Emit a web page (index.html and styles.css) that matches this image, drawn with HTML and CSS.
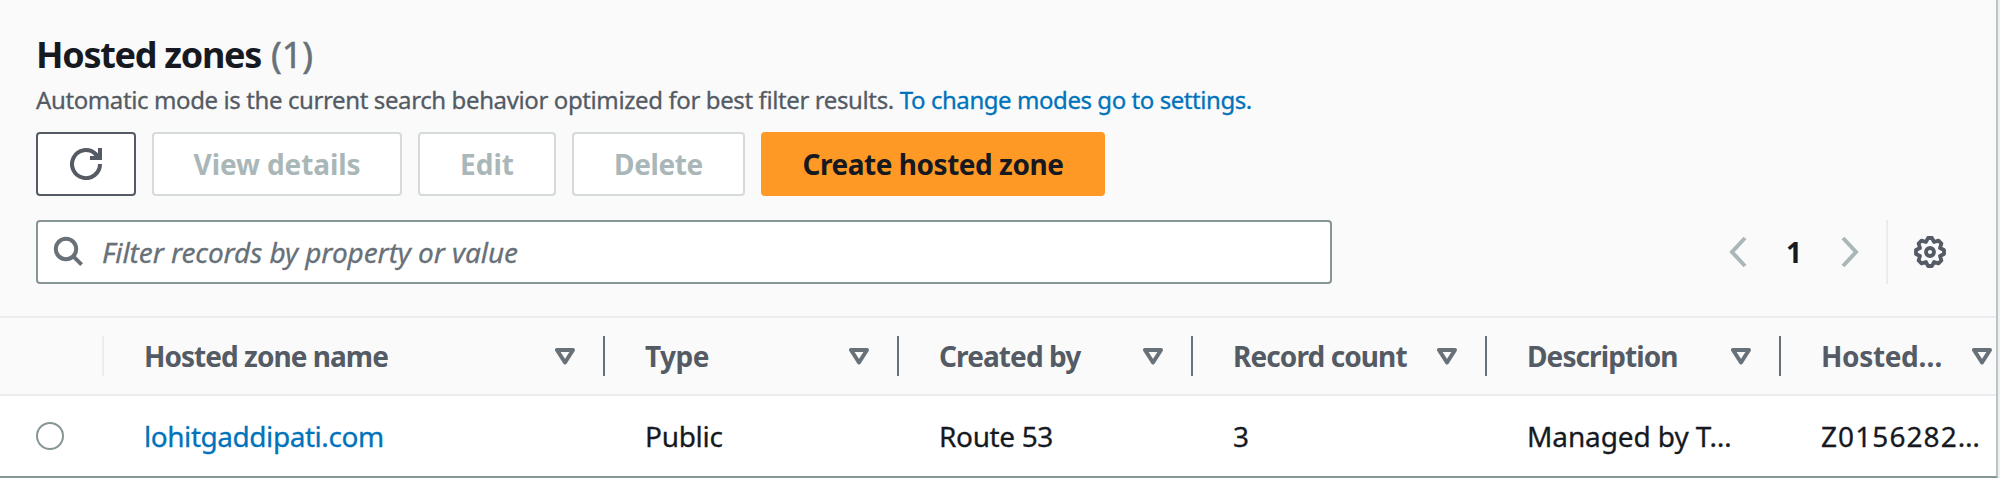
FILE: index.html
```
<!DOCTYPE html>
<html lang="en">
<head>
<meta charset="utf-8">
<title>Hosted zones</title>
<link rel="stylesheet" href="styles.css">
</head>
<body>
<main class="panel">
  <header class="header">
    <h2 class="title"><span class="title-text">Hosted zones</span> <span class="count">(1)</span></h2>
    <p class="desc"><span class="desc-text">Automatic mode is the current search behavior optimized for best filter results.</span><a class="link settings-link">To change modes go to settings.</a></p>
    <div class="actions">
      <button class="btn btn-refresh" aria-label="Refresh"><svg class="icon" viewBox="0 0 32 32"><path d="M30 16a14 14 0 1 1-4.500-10.200L28 8.500"/><path class="solid" d="M28 0h4v12H20V8h4.500l-1.500-2 3-2 2 2z"/></svg></button>
      <button class="btn btn-view" disabled>View details</button>
      <button class="btn btn-edit" disabled>Edit</button>
      <button class="btn btn-delete" disabled>Delete</button>
      <button class="btn btn-primary">Create hosted zone</button>
    </div>
    <div class="tools">
      <div class="search">
        <svg class="icon search-icon" viewBox="0 0 32 32"><circle cx="13" cy="13" r="10.200"/><path d="M20.300 20.300l8.300 8.300"/></svg>
        <span class="placeholder">Filter records by property or value</span>
      </div>
      <nav class="pager">
        <svg class="chevron" viewBox="0 0 18 32"><path d="M16 2L3 16l13 14"/></svg>
        <span class="page">1</span>
        <svg class="chevron" viewBox="0 0 18 32"><path d="M2 2l13 14L2 30"/></svg>
        <span class="rule"></span>
        <svg class="gear" viewBox="0 0 32 32"><path d="M30 14v4L26 20L27.400 24.500L24.500 27.400L20 26L18 30H14L12 26L7.500 27.400L4.600 24.500L6 20L2 18V14L6 12L4.600 7.500L7.500 4.600L12 6L14 2H18L20 6L24.500 4.600L27.400 7.500L26 12z"/><circle cx="16" cy="16" r="4"/></svg>
      </nav>
    </div>
  </header>
  <section class="table">
    <div class="row head">
      <div class="cell select"></div>
      <div class="cell"><span class="h-name">Hosted zone name</span><svg class="caret" viewBox="0 0 20 17"><path d="M2 2h16l-8 12.500z"/></svg></div>
      <div class="cell"><span class="h-type">Type</span><svg class="caret" viewBox="0 0 20 17"><path d="M2 2h16l-8 12.500z"/></svg></div>
      <div class="cell"><span class="h-by">Created by</span><svg class="caret" viewBox="0 0 20 17"><path d="M2 2h16l-8 12.500z"/></svg></div>
      <div class="cell"><span class="h-count">Record count</span><svg class="caret" viewBox="0 0 20 17"><path d="M2 2h16l-8 12.500z"/></svg></div>
      <div class="cell"><span class="h-desc">Description</span><svg class="caret" viewBox="0 0 20 17"><path d="M2 2h16l-8 12.500z"/></svg></div>
      <div class="cell last"><span class="h-id">Hosted…</span><svg class="caret" viewBox="0 0 20 17"><path d="M2 2h16l-8 12.500z"/></svg></div>
    </div>
    <div class="row body">
      <div class="cell select"><span class="radio"></span></div>
      <div class="cell"><a class="link c-name">lohitgaddipati.com</a></div>
      <div class="cell"><span class="c-type">Public</span></div>
      <div class="cell"><span class="c-by">Route 53</span></div>
      <div class="cell">3</div>
      <div class="cell"><span class="c-desc">Managed by T…</span></div>
      <div class="cell last"><span class="c-id">Z0156282…</span></div>
    </div>
  </section>
</main>
</body>
</html>
```
FILE: styles.css
```
* { box-sizing: border-box; }
body {
  margin: 0;
  height: 478px;
  overflow: hidden;
  background: #eef0f1;
  font-family: "Noto Sans", sans-serif;
  font-size: 28px;
  color: #16191f;
}
.panel {
  width: 1998px;
  height: 478px;
  background: #fff;
  border-right: 2px solid #bcc3c5;
  border-bottom: 2px solid #879596;
  display: flex;
  flex-direction: column;
}
.header {
  height: 316px;
  padding: 32px 50px 0 36px;
  background: #fafafa;
}
.title { margin: 0; height: 46px; font-size: 36px; line-height: 46px; display: flex; gap: 10px; }
.title-text { letter-spacing: -1.3px; }
.count { font-weight: 400; color: #687078; -webkit-text-stroke: .5px; }
.desc { margin: 6px 0 0; height: 32px; font-size: 24px; line-height: 32px; color: #545b64; display: flex; gap: 6px; white-space: nowrap; -webkit-text-stroke: .3px; }
.desc-text { letter-spacing: -.39px; }
.settings-link { letter-spacing: -.44px; }
.link { color: #0073bb; }
.actions { display: flex; gap: 16px; margin-top: 16px; }
.btn {
  height: 64px;
  padding: 0;
  border: 2px solid #d5dbdb;
  border-radius: 4px;
  background: #fff;
  font: 700 28px/56px "Noto Sans", sans-serif;
  color: #aab7b8;
  display: flex;
  align-items: center;
  justify-content: center;
}
.btn-refresh { width: 100px; border-color: #545b64; }
.btn-view { width: 250px; letter-spacing: -.1px; }
.btn-edit { width: 138px; }
.btn-delete { width: 173px; letter-spacing: -.36px; }
.btn-primary { width: 344px; border-color: #ff9926; background: #ff9926; color: #16191f; letter-spacing: -.47px; }
.icon { width: 32px; height: 32px; fill: none; stroke: #545b64; stroke-width: 4; }
.solid { fill: #545b64; stroke: none; }
.tools { display: flex; justify-content: space-between; margin-top: 24px; }
.search {
  width: 1296px;
  height: 64px;
  border: 2px solid #879596;
  border-radius: 4px;
  background: #fff;
  padding-left: 15px;
  display: flex;
  align-items: center;
  gap: 17px;
}
.search-icon { stroke: #687078; stroke-width: 4; }
.placeholder { font-style: italic; color: #687078; letter-spacing: -.08px; line-height: 58px; -webkit-text-stroke: .3px; }
.pager { display: flex; align-items: center; height: 64px; }
.chevron { width: 18px; height: 32px; fill: none; stroke: #aab7b8; stroke-width: 4; }
.page { width: 94px; text-align: center; font-weight: 700; line-height: 60px; }
.rule { width: 2px; height: 64px; margin: 0 26px 0 27px; background: #eaeded; }
.gear { width: 32px; height: 32px; fill: none; stroke: #545b64; stroke-width: 3.8; stroke-linejoin: round; }
.table { flex: 1; display: flex; flex-direction: column; }
.row { display: grid; grid-template-columns: 104px 501px repeat(4, 294px) 215px; align-items: center; }
.head {
  height: 80px;
  background: #fafafa;
  border-top: 2px solid #eaeded;
  border-bottom: 2px solid #eaeded;
  font-weight: 700;
  color: #545b64;
}
.body { height: 80px; -webkit-text-stroke: .3px; }
.cell {
  height: 40px;
  padding: 0 28px 0 40px;
  display: flex;
  align-items: center;
  justify-content: space-between;
  white-space: nowrap;
}
.head .cell { border-right: 2px solid #687078; }
.head .select { border-right-color: #eaeded; }
.head .last { border-right: 0; }
.last { padding-right: 4px; }
.select { padding: 0 0 0 36px; }
.caret { width: 20px; height: 17px; fill: none; stroke: #687078; stroke-width: 4; stroke-linejoin: round; }
.radio { width: 28px; height: 28px; border: 2px solid #879596; border-radius: 50%; background: #fff; }
.h-name { letter-spacing: -.96px; }
.h-type { letter-spacing: -.5px; }
.h-by { letter-spacing: -.9px; }
.h-count { letter-spacing: -.9px; }
.h-desc { letter-spacing: -.9px; }
.h-id { letter-spacing: -.35px; }
.c-name { letter-spacing: -.45px; }
.c-type { letter-spacing: -.3px; }
.c-by { letter-spacing: -.36px; }
.c-desc { letter-spacing: -.1px; }
.c-id { letter-spacing: 1.08px; }
```
